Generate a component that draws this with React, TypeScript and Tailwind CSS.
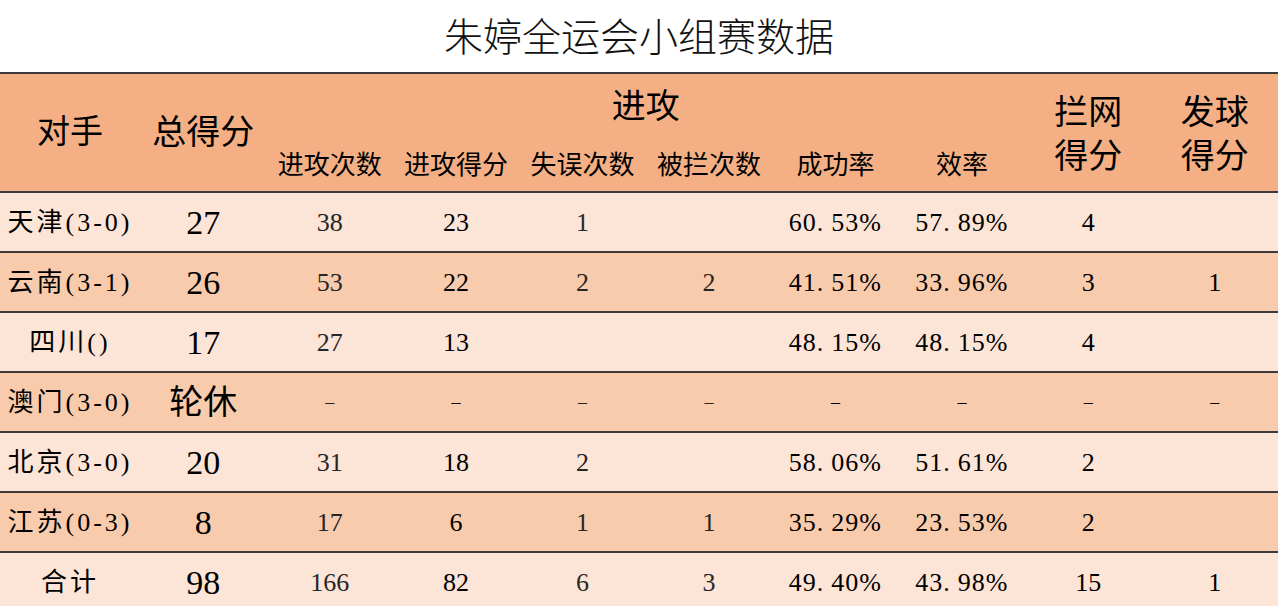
type Row = {
  team: string;
  total: string;
  cells: string[];
  tone: "light" | "mid";
};

const rows: Row[] = [
  { team: "天津(3-0)", total: "27", cells: ["38", "23", "1", "", "60.53%", "57.89%", "4", ""], tone: "light" },
  { team: "云南(3-1)", total: "26", cells: ["53", "22", "2", "2", "41.51%", "33.96%", "3", "1"], tone: "mid" },
  { team: "四川()", total: "17", cells: ["27", "13", "", "", "48.15%", "48.15%", "4", ""], tone: "light" },
  { team: "澳门(3-0)", total: "轮休", cells: ["–", "–", "–", "–", "–", "–", "–", "–"], tone: "mid" },
  { team: "北京(3-0)", total: "20", cells: ["31", "18", "2", "", "58.06%", "51.61%", "2", ""], tone: "light" },
  { team: "江苏(0-3)", total: "8", cells: ["17", "6", "1", "1", "35.29%", "23.53%", "2", ""], tone: "mid" },
  { team: "合计", total: "98", cells: ["166", "82", "6", "3", "49.40%", "43.98%", "15", "1"], tone: "light" },
];

const font = { fontFamily: '"Liberation Serif", "Noto Sans CJK SC", serif' };

// columns that look a bit heavier in the sheet
const darkCols = [1, 4, 5, 6, 7];

const Pct = ({ value }: { value: string }) => {
  const [whole, frac] = value.split(".");
  return (
    <span className="tracking-[1px]">
      {whole}
      <span className="mr-[7px]">.</span>
      {frac}
    </span>
  );
};

const Cell = ({ value, col }: { value: string; col: number }) => {
  const isPct = value.includes("%");
  const isDash = value === "–";
  return (
    <div
      className={`flex items-center justify-center ${
        darkCols.includes(col) ? "text-black" : "text-[#262626]"
      } ${isDash ? "text-[18px] text-[#555]" : "text-[26px]"}`}
    >
      {isPct ? <Pct value={value} /> : value}
    </div>
  );
};

const App = () => {
  return (
    <div className="w-[1278px] h-[606px] overflow-hidden bg-white" style={font}>
      <div className="h-[72px] flex items-center justify-center text-[39px] font-light text-[#111] pt-1">
        朱婷全运会小组赛数据
      </div>

      <div className="h-[119px] border-t-2 border-[#3b3b3b] bg-[#F4B084] grid grid-cols-[140px_repeat(9,minmax(0,1fr))] grid-rows-[62px_1fr] text-black">
        <div className="row-span-2 flex items-center justify-center text-[33px]">对手</div>
        <div className="row-span-2 flex items-center justify-center text-[34px]">总得分</div>
        <div className="col-span-6 flex items-end justify-center text-[34px] pb-1">进攻</div>
        <div className="row-span-2 flex flex-col items-center justify-center text-[34px] leading-[44px] pt-1">
          <span>拦网</span>
          <span>得分</span>
        </div>
        <div className="row-span-2 flex flex-col items-center justify-center text-[34px] leading-[44px] pt-1">
          <span>发球</span>
          <span>得分</span>
        </div>
        {["进攻次数", "进攻得分", "失误次数", "被拦次数", "成功率", "效率"].map((h) => (
          <div key={h} className="flex items-center justify-center text-[26px] whitespace-nowrap pt-1">
            {h}
          </div>
        ))}
      </div>

      {rows.map((r) => (
        <div
          key={r.team}
          className={`h-[60px] border-t-2 border-[#3b3b3b] grid grid-cols-[140px_repeat(9,minmax(0,1fr))] ${
            r.tone === "light" ? "bg-[#FCE4D6]" : "bg-[#F8CBAD]"
          }`}
        >
          <div className="flex items-center justify-center text-[26px] tracking-[3px] whitespace-nowrap text-black">
            {r.team}
          </div>
          <div className="flex items-center justify-center text-[34px] text-black">{r.total}</div>
          {r.cells.map((c, i) => (
            <Cell key={i} value={c} col={i} />
          ))}
        </div>
      ))}
    </div>
  );
};

export default App;
